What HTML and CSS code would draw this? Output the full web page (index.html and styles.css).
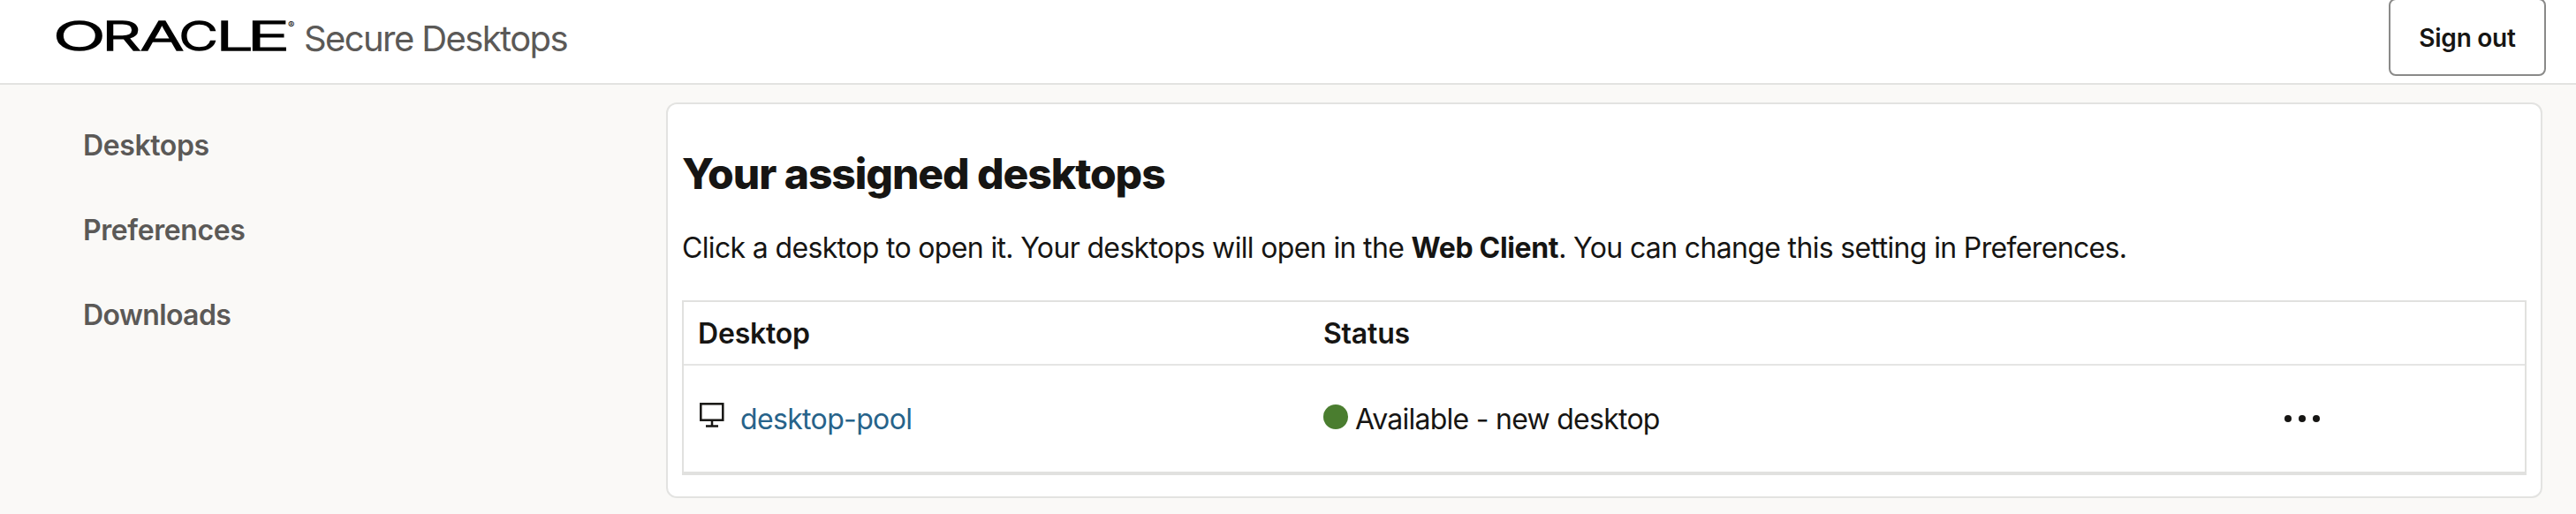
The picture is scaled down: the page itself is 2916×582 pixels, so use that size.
FILE: index.html
```html
<!DOCTYPE html>
<html lang="en">
<head>
<meta charset="utf-8">
<title>Secure Desktops</title>
<link rel="stylesheet" href="styles.css">
</head>
<body>
<header class="topbar">
  <div class="brand">
    <svg class="brand-logo" width="274" height="44" viewBox="62 20 274 44"><text class="wordmark" y="57.2"><tspan x="60.2" textLength="59.2" lengthAdjust="spacingAndGlyphs">O</tspan><tspan x="115.4" textLength="44.2" lengthAdjust="spacingAndGlyphs">R</tspan><tspan x="159" textLength="49" lengthAdjust="spacingAndGlyphs">A</tspan><tspan x="202.6" textLength="44.2" lengthAdjust="spacingAndGlyphs">C</tspan><tspan x="244.4" textLength="42" lengthAdjust="spacingAndGlyphs">L</tspan><tspan x="279.6" textLength="48.5" lengthAdjust="spacingAndGlyphs">E</tspan></text><text class="registered" x="326" y="32">®</text></svg>
    <span class="brand-name">Secure Desktops</span>
  </div>
  <button class="sign-out" type="button">Sign out</button>
</header>
<div class="layout">
  <nav class="sidebar">
    <a class="nav-item">Desktops</a>
    <a class="nav-item">Preferences</a>
    <a class="nav-item nav-item-wide">Downloads</a>
  </nav>
  <main class="card">
    <h1 class="title">Your assigned desktops</h1>
    <p class="intro">Click a desktop to open it. Your desktops will open in the <b class="client">Web Client</b>. You can change this setting in Preferences.</p>
    <div class="table">
      <div class="row head">
        <div class="cell">Desktop</div>
        <div class="cell">Status</div>
        <div class="cell"></div>
      </div>
      <div class="row body">
        <div class="cell">
          <svg class="monitor" width="28" height="28" viewBox="0 0 28 28"><rect x="1.3" y="1.3" width="25" height="18.4"/><path d="M14 20v6M7 26.5h14"/></svg>
          <a class="link">desktop-pool</a>
        </div>
        <div class="cell status">
          <span class="dot"></span>
          <span>Available - new desktop</span>
        </div>
        <div class="cell">
          <svg class="more" width="40" height="8" viewBox="0 0 40 8"><circle cx="4" cy="4" r="4"/><circle cx="20" cy="4" r="4"/><circle cx="36" cy="4" r="4"/></svg>
        </div>
      </div>
    </div>
  </main>
</div>
</body>
</html>
```
FILE: styles.css
```css
* { box-sizing: border-box; }
body {
  margin: 0;
  height: 582px;
  overflow: hidden;
  background: #faf9f7;
  color: #161513;
  font-family: Inter, "Liberation Sans", sans-serif;
  font-size: 32px;
}
.topbar {
  height: 96px;
  padding: 0 34px 0 62px;
  display: flex;
  justify-content: space-between;
  align-items: flex-start;
  background: #fff;
  border-bottom: 2px solid #e3e3e1;
}
.brand { display: flex; }
.brand-logo { display: block; margin-top: 20px; overflow: visible; }
.wordmark {
  font-size: 44.5px;
  font-weight: 300;
  fill: #000;
  stroke: #000;
  stroke-width: 1.6px;
}
.registered { font-size: 11px; fill: #000; }
.brand-name {
  margin: 20px 0 0 8px;
  font-size: 40px;
  line-height: 48px;
  letter-spacing: -1.6px;
  color: #5b5957;
}
.sign-out {
  width: 178px;
  height: 88px;
  margin-top: -2px;
  padding: 2px 0 0;
  border: 2px solid #8a8a89;
  border-radius: 8px;
  background: #fff;
  color: #161513;
  font-family: inherit;
  font-size: 28px;
  font-weight: 600;
  letter-spacing: -0.25px;
}
.layout { display: flex; padding: 20px 38px 0 0; }
.sidebar {
  width: 754px;
  padding: 1px 0 0 94px;
  display: flex;
  flex-direction: column;
}
.nav-item {
  height: 96px;
  line-height: 96px;
  font-weight: 600;
  letter-spacing: -0.4px;
  color: #5b5957;
}
.nav-item-wide { letter-spacing: -0.6px; }
.card {
  flex: 1;
  height: 448px;
  padding: 49px 16px 0;
  background: #fff;
  border: 2px solid #e3e3e1;
  border-radius: 12px;
}
.title {
  margin: 0;
  font-size: 48px;
  line-height: 60px;
  font-weight: 800;
  letter-spacing: -1.07px;
}
.intro {
  margin: 34px 0 0;
  line-height: 40px;
  letter-spacing: -0.65px;
  white-space: nowrap;
}
.client { letter-spacing: -0.35px; }
.table {
  height: 198px;
  margin-top: 39px;
  border: 2px solid #e1e1df;
  border-bottom-width: 4px;
}
.row { display: grid; grid-template-columns: 708px 1fr 288px; }
.cell { display: flex; align-items: center; padding: 0 16px; }
.head {
  height: 72px;
  border-bottom: 2px solid #e5e5e4;
  font-weight: 600;
  letter-spacing: -0.2px;
}
.body { height: 120px; letter-spacing: -0.65px; }
.monitor {
  margin: -8px 18px 0 2px;
  fill: none;
  stroke: #161513;
  stroke-width: 2.5;
}
.link { color: #27638a; }
.status { letter-spacing: -0.74px; }
.dot {
  width: 28px;
  height: 28px;
  margin: -4px 8px 0 0;
  border-radius: 50%;
  background: #4a7d2f;
}
.more { fill: #161513; }
```
